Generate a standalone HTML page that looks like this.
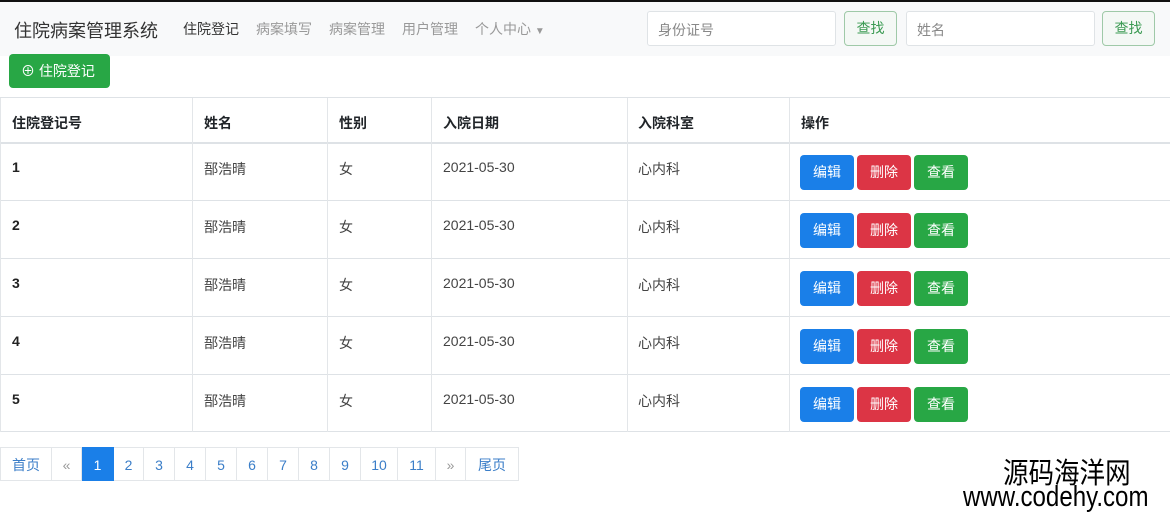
<!DOCTYPE html>
<html><head><meta charset="utf-8"><style>
*{box-sizing:border-box;margin:0;padding:0}
body{width:1170px;height:518px;overflow:hidden;background:#fff;font-family:"Liberation Sans","Noto Sans CJK SC",sans-serif;color:#212529;position:relative}
.a{position:absolute}
.nav{left:0;top:0;width:1170px;height:56px;background:#f8f9fa;border-top:2px solid #111}
.brand{left:14px;top:17px;font-size:18px;color:#333}
.nl{top:19px;font-size:14px;color:#999}
.inp{height:35px;top:11px;border:1px solid #dfe3e6;background:#fff;border-radius:3px;font-size:14px;color:#888;padding:8px 10px}
.sb{height:35px;top:11px;width:53px;border:1px solid #9fc9a8;border-radius:4px;color:#3a9a52;font-size:14px;text-align:center;line-height:33px;background:#f4f8f5}
.add{left:9px;top:54px;width:101px;height:34px;background:#28a745;border-radius:4px;color:#fff;font-size:14px;line-height:34px;padding-left:12px}
.hl{left:0;width:1170px;height:2px;background:#dee2e6}
.vl{top:98px;width:1px;height:334px;background:#e3e6e9}
.th{top:113px;font-size:14px;font-weight:bold}
.td{font-size:14px;color:#444}
.btn{width:54px;height:35px;border-radius:4px;color:#fff;font-size:14px;text-align:center;line-height:35px}
.pg{top:447px;height:34px;border:1px solid #e3e6e9;border-left:none;font-size:14px;color:#3b7ec8;text-align:center;line-height:34px}
</style></head><body>
<div class="a nav"></div>
<div class="a brand">住院病案管理系统</div>
<div class="a nl" style="left:183px;color:#333">住院登记</div>
<div class="a nl" style="left:256px">病案填写</div>
<div class="a nl" style="left:329px">病案管理</div>
<div class="a nl" style="left:402px">用户管理</div>
<div class="a nl" style="left:475px">个人中心 <span style="font-size:10px">▼</span></div>
<div class="a inp" style="left:647px;width:189px">身份证号</div>
<div class="a sb" style="left:844px">查找</div>
<div class="a inp" style="left:906px;width:189px">姓名</div>
<div class="a sb" style="left:1102px">查找</div>
<div class="a add">⊕ 住院登记</div>

<div class="a hl" style="top:97px;height:1px"></div>
<div class="a hl" style="top:142px"></div>
<div class="a hl" style="top:200px;height:1px"></div>
<div class="a hl" style="top:258px;height:1px"></div>
<div class="a hl" style="top:316px;height:1px"></div>
<div class="a hl" style="top:374px;height:1px"></div>
<div class="a hl" style="top:431px;height:1px"></div>
<div class="a vl" style="left:0"></div>
<div class="a vl" style="left:192px"></div>
<div class="a vl" style="left:327px"></div>
<div class="a vl" style="left:431px"></div>
<div class="a vl" style="left:627px"></div>
<div class="a vl" style="left:789px"></div>

<div class="a th" style="left:12px">住院登记号</div>
<div class="a th" style="left:204px">姓名</div>
<div class="a th" style="left:339px">性别</div>
<div class="a th" style="left:443px">入院日期</div>
<div class="a th" style="left:638px">入院科室</div>
<div class="a th" style="left:801px">操作</div>

<div id="rows"></div>
<script>
var h='';
for(var i=0;i<5;i++){var t=143+i*58;
h+='<div class="a td" style="left:12px;top:'+(t+16)+'px;font-weight:bold;color:#222">'+(i+1)+'</div>'+
'<div class="a td" style="left:204px;top:'+(t+16)+'px">郚浩晴</div>'+
'<div class="a td" style="left:339px;top:'+(t+16)+'px">女</div>'+
'<div class="a td" style="left:443px;top:'+(t+16)+'px">2021-05-30</div>'+
'<div class="a td" style="left:638px;top:'+(t+16)+'px">心内科</div>'+
'<div class="a btn" style="left:800px;top:'+(t+12)+'px;background:#1a7fe8">编辑</div>'+
'<div class="a btn" style="left:857px;top:'+(t+12)+'px;background:#dc3545">删除</div>'+
'<div class="a btn" style="left:914px;top:'+(t+12)+'px;background:#28a745">查看</div>';}
var p=[['首页',0,52],['«',52,82],['1',82,114],['2',114,144],['3',144,175],['4',175,206],['5',206,237],['6',237,268],['7',268,299],['8',299,330],['9',330,361],['10',361,398],['11',398,436],['»',436,466],['尾页',466,519]];
p.forEach(function(q,j){var s=j==2?'background:#1a7fe8;color:#fff;border-color:#1a7fe8;':'';if(j==0)s+='border-left:1px solid #e3e6e9;';if(j==1||j==13)s+='color:#999;';
h+='<div class="a pg" style="left:'+q[1]+'px;width:'+(q[2]-q[1])+'px;'+s+'">'+q[0]+'</div>';});
document.getElementById('rows').innerHTML=h;
</script>
<div class="a" style="left:1003px;top:458px;font-size:29px;line-height:32px;color:#000;transform:scaleX(0.88);transform-origin:left top;white-space:nowrap">源码海洋网</div>
<div class="a" style="left:963px;top:481px;font-size:29px;line-height:32px;color:#000;transform:scaleX(0.83);transform-origin:left top;white-space:nowrap">www.codehy.com</div>
</body></html>
